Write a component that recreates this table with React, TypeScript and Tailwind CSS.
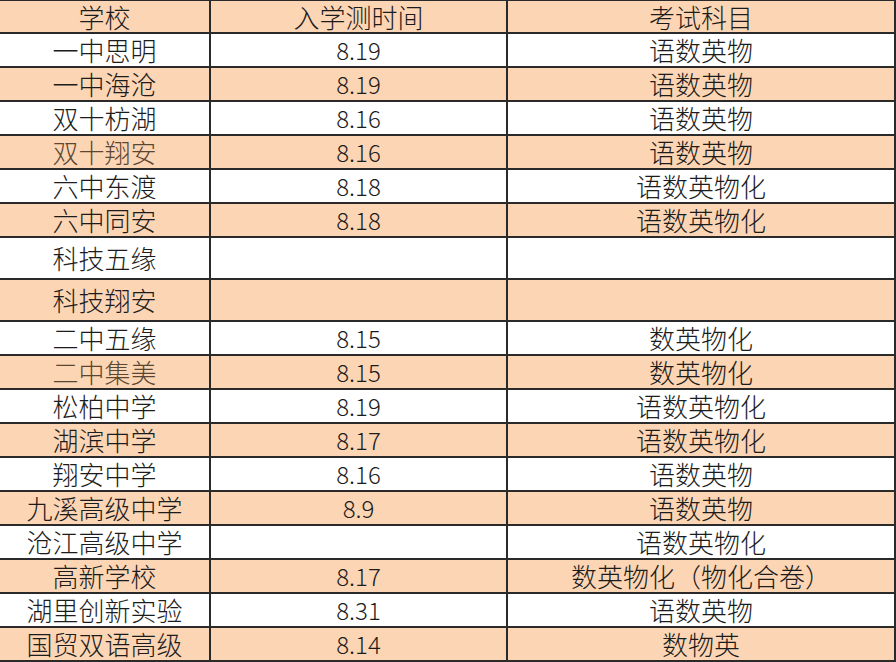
import React from "react";

type Row = { school: string; date: string; subj: string; tall?: boolean; muted?: boolean };

const rows: Row[] = [
  { school: "一中思明", date: "8.19", subj: "语数英物" },
  { school: "一中海沧", date: "8.19", subj: "语数英物" },
  { school: "双十枋湖", date: "8.16", subj: "语数英物" },
  { school: "双十翔安", date: "8.16", subj: "语数英物", muted: true },
  { school: "六中东渡", date: "8.18", subj: "语数英物化" },
  { school: "六中同安", date: "8.18", subj: "语数英物化" },
  { school: "科技五缘", date: "", subj: "", tall: true },
  { school: "科技翔安", date: "", subj: "", tall: true },
  { school: "二中五缘", date: "8.15", subj: "数英物化" },
  { school: "二中集美", date: "8.15", subj: "数英物化", muted: true },
  { school: "松柏中学", date: "8.19", subj: "语数英物化" },
  { school: "湖滨中学", date: "8.17", subj: "语数英物化" },
  { school: "翔安中学", date: "8.16", subj: "语数英物" },
  { school: "九溪高级中学", date: "8.9", subj: "语数英物" },
  { school: "沧江高级中学", date: "", subj: "语数英物化" },
  { school: "高新学校", date: "8.17", subj: "数英物化（物化合卷）" },
  { school: "湖里创新实验", date: "8.31", subj: "语数英物" },
  { school: "国贸双语高级", date: "8.14", subj: "数物英" },
];

const cjk = "font-['Noto_Sans_CJK_SC','Noto_Sans',sans-serif]";

export default function App() {
  return (
    <div className={`w-[896px] h-[662px] bg-white text-[#1c1c1c] font-light ${cjk} overflow-hidden`}>
      <div className="border-t border-[#2a2a2a]">
        <div className="flex h-[33px] bg-[#fcd5b4] border-b-2 border-[#2a2a2a] text-[26px] leading-[30px]">
          <div className="w-[211px] border-r-2 border-[#2a2a2a] flex items-center justify-center">学校</div>
          <div className="w-[297px] border-r-2 border-[#2a2a2a] flex items-center justify-center">入学测时间</div>
          <div className="w-[388px] border-r-2 border-[#2a2a2a] flex items-center justify-center">考试科目</div>
        </div>
        {rows.map((r, i) => (
          <div
            key={i}
            className={`flex border-b-2 border-[#2a2a2a] leading-[30px] ${r.tall ? "h-[42px]" : "h-[34px]"} ${
              i % 2 === 1 ? "bg-[#fcd5b4]" : "bg-white"
            }`}
          >
            <div
              className={`w-[211px] border-r-2 border-[#2a2a2a] flex items-center justify-center text-[26px] ${
                r.muted ? "text-[#5b4632]" : ""
              }`}
            >
              {r.school}
            </div>
            <div className="w-[297px] border-r-2 border-[#2a2a2a] flex items-center justify-center text-[24px]">
              {r.date}
            </div>
            <div className="w-[388px] border-r-2 border-[#2a2a2a] flex items-center justify-center text-[26px]">
              {r.subj}
            </div>
          </div>
        ))}
      </div>
    </div>
  );
}
